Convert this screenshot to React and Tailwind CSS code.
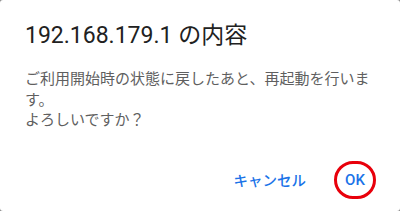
export default function App() {
  return (
    <div className="w-[400px] h-[211px] bg-[#8a8a8a]">
      <div className="w-full h-full bg-white rounded-[3px] flex flex-col" style={{ fontFamily: 'Roboto, "Noto Sans CJK JP", sans-serif' }}>
        <div className="pl-[25px] pt-[19px] text-[23px] leading-[34px] text-[#212121]">192.168.179.1 の内容</div>
        <div className="pl-[25px] pr-[25px] mt-[15px] text-[15px] leading-[20.5px] text-[#5f5f5f]" style={{ fontFamily: '"Noto Sans CJK JP", sans-serif' }}>
          <div>ご利用開始時の状態に戻したあと、再起動を行います。</div>
          <div>よろしいですか？</div>
        </div>
        <div className="flex-1" />
        <div className="flex items-center justify-end pr-[24px] pb-[12px] gap-[28px]">
          <div className="text-[14.5px] font-medium text-[#1a73e8]" style={{ fontFamily: '"Noto Sans CJK JP", sans-serif' }}>キャンセル</div>
          <div className="relative w-[42px] h-[38px] flex items-center justify-center">
            <span className="text-[15px] font-medium text-[#1a73e8]">OK</span>
            <div className="absolute inset-0 rounded-full border-[3px] border-[#e8000b]" />
          </div>
        </div>
      </div>
    </div>
  );
}
